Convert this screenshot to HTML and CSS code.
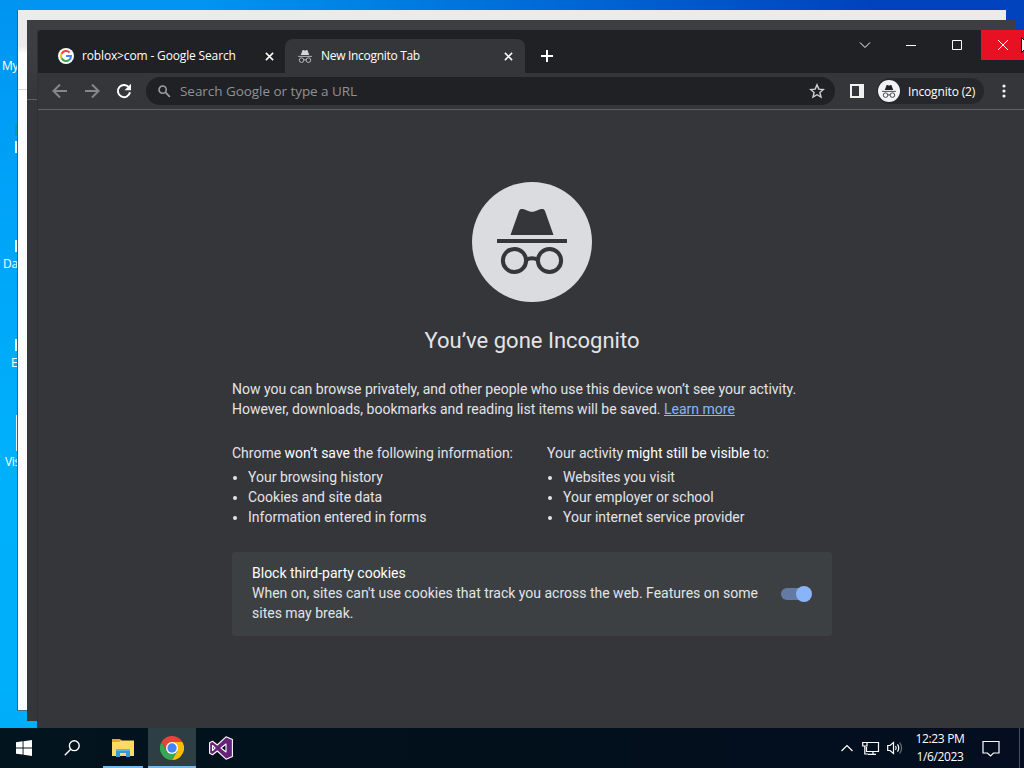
FILE: index.html
```html
<!DOCTYPE html>
<html lang="en">
<head>
    <meta charset="UTF-8">
    <meta name="viewport" content="width=device-width, initial-scale=1.0">
    <title>New Incognito Tab</title>
    <link rel="stylesheet" href="styles.css">
</head>
<body>
    <!-- shapes shared by the tab, the avatar and the page logo -->
    <svg class="defs" width="0" height="0">
        <symbol id="incognito" viewBox="0 0 70 66">
            <path fill="currentColor" d="M22 2C23 -.5 25 -.6 27 .3L32 2.300Q35 3.300 38 2.300L43 .3C45 -.6 47 -.5 48 2L56.500 26H13.500Z"/>
            <path fill="currentColor" d="M0 30H70V34H0Z"/>
            <g fill="none" stroke="currentColor" stroke-width="4">
                <circle cx="17.500" cy="51.500" r="11.600"/>
                <circle cx="52.500" cy="51.500" r="11.600"/>
                <path d="M29 51Q35 47.500 41 51"/>
            </g>
        </symbol>
    </svg>

    <div class="desktop">
        <span class="icon-label label-my">My</span>
        <span class="icon-label label-da">Da</span>
        <span class="icon-label label-e">E</span>
        <span class="icon-label label-vis">Vis</span>
        <i class="sliver sliver-green"></i>
        <i class="sliver sliver-1"></i>
        <i class="sliver sliver-2"></i>
        <i class="sliver sliver-3"></i>
        <i class="sliver sliver-4"></i>

        <div class="window window-light"></div>
        <div class="window window-dark"></div>

        <div class="window browser">
            <div class="tabstrip">
                <div class="tab">
                    <svg class="favicon" viewBox="0 0 16 16">
                        <circle cx="8" cy="8" r="8" fill="#fff"/>
                        <g fill="none" stroke-width="2">
                            <path stroke="#ea4335" d="M3.600 5.700A5 5 0 0 1 11.600 4.500"/>
                            <path stroke="#fbbc05" d="M3.600 10.300A5 5 0 0 1 3.600 5.700"/>
                            <path stroke="#34a853" d="M11.200 11.900A5 5 0 0 1 3.600 10.300"/>
                            <path stroke="#4285f4" d="M8 8H13A5 5 0 0 1 11.200 11.900"/>
                        </g>
                    </svg>
                    <span class="tab-title title-search">roblox&gt;com - Google Search</span>
                    <svg class="tab-close" viewBox="0 0 10 10"><path d="M1 1L9 9M9 1L1 9"/></svg>
                </div>
                <div class="tab active">
                    <svg class="favicon spy"><use href="#incognito"/></svg>
                    <span class="tab-title title-new">New Incognito Tab</span>
                    <svg class="tab-close" viewBox="0 0 10 10"><path d="M1 1L9 9M9 1L1 9"/></svg>
                </div>
                <svg class="new-tab" viewBox="0 0 12 12"><path d="M6 0V12M0 6H12"/></svg>
                <div class="controls">
                    <span class="control"><svg width="12" height="12" viewBox="0 0 12 12"><path d="M1 3.500L6 8.500L11 3.500"/></svg></span>
                    <span class="control"><svg width="12" height="12" viewBox="0 0 12 12"><path d="M1 6.500H11"/></svg></span>
                    <span class="control"><svg width="12" height="12" viewBox="0 0 12 12"><path d="M1.500 1.500H10.500V10.500H1.500Z"/></svg></span>
                    <span class="control control-close"><svg width="12" height="12" viewBox="0 0 12 12"><path d="M1 1L11 11M11 1L1 11"/></svg></span>
                </div>
            </div>

            <div class="toolbar">
                <svg class="nav dim" viewBox="0 0 16 16"><path d="M15 8H2M8 1.500L1.500 8L8 14.500"/></svg>
                <svg class="nav dim" viewBox="0 0 16 16"><path d="M1 8H14M8 1.500L14.500 8L8 14.500"/></svg>
                <svg class="nav" viewBox="0 0 16 16"><path d="M13.200 4.800A6.100 6.100 0 1 0 14 9.300"/><path class="solid" d="M15 .8V7.200H8.600Z"/></svg>
                <div class="omnibox">
                    <svg class="search" viewBox="0 0 14 14"><circle cx="5" cy="5" r="3.900"/><path d="M8 8L12.800 12.800"/></svg>
                    <span class="placeholder">Search Google or type a URL</span>
                    <svg class="star" viewBox="0 0 16 16"><path d="M8 1.800L9.800 6.100L14.400 6.500L10.900 9.600L12 14.100L8 11.700L4 14.100L5.100 9.600L1.600 6.500L6.200 6.100Z"/></svg>
                </div>
                <span class="side-panel"></span>
                <div class="profile">
                    <span class="avatar"><svg><use href="#incognito"/></svg></span>
                    <span class="profile-name">Incognito (2)</span>
                </div>
                <svg class="menu" viewBox="0 0 4 14"><circle cx="2" cy="2" r="1.600"/><circle cx="2" cy="7" r="1.600"/><circle cx="2" cy="12" r="1.600"/></svg>
            </div>

            <div class="page">
                <div class="logo"><svg><use href="#incognito"/></svg></div>
                <h1>You’ve gone Incognito</h1>
                <p class="intro">Now you can browse privately, and other people who use this device won’t see your activity.<br>However, downloads, bookmarks and reading list items will be saved. <a href="#">Learn more</a></p>
                <div class="columns">
                    <div>
                        Chrome <em>won’t save</em> the following information:
                        <ul>
                            <li>Your browsing history</li>
                            <li>Cookies and site data</li>
                            <li>Information entered in forms</li>
                        </ul>
                    </div>
                    <div>
                        Your activity <em>might still be visible</em> to:
                        <ul>
                            <li>Websites you visit</li>
                            <li>Your employer or school</li>
                            <li>Your internet service provider</li>
                        </ul>
                    </div>
                </div>
                <div class="cookies">
                    <div>
                        <em>Block third-party cookies</em><br>
                        When on, sites can't use cookies that track you across the web. Features on some<br>sites may break.
                    </div>
                    <span class="toggle"></span>
                </div>
            </div>
        </div>

        <div class="taskbar">
            <span class="task"><svg width="16" height="16" viewBox="0 0 16 16"><path fill="#fff" d="M0 2.200L6.600 1.300V7.500H0ZM7.500 1.200L16 0V7.500H7.500ZM0 8.400H6.600V14.600L0 13.700ZM7.500 8.400H16V16L7.500 14.800Z"/></svg></span>
            <span class="task"><svg width="16" height="16" viewBox="0 0 16 16" fill="none" stroke="#fff" stroke-width="1.400"><circle cx="10.300" cy="5.700" r="4.900"/><path d="M6.700 9.300L.8 15.200"/></svg></span>
            <span class="task task-files open">
                <svg width="22" height="20" viewBox="0 0 22 20">
                    <path fill="#e8a820" d="M0 1H8L10 3H21V6H0Z"/>
                    <path fill="#ffd966" d="M0 4H7L9 2.500H22V18H0Z"/>
                    <path fill="#3f96cf" d="M4 11H18V19H14V15H8V19H4Z"/>
                    <path fill="#62b4e6" d="M4 11H18V13H4Z"/>
                </svg>
            </span>
            <span class="task task-chrome open current">
                <svg width="24" height="24" viewBox="0 0 24 24">
                    <path fill="#fbbc05" d="M12 6H22.400A12 12 0 0 1 12 24L17.200 15Z"/>
                    <path fill="#34a853" d="M12 24A12 12 0 0 1 1.600 6L6.800 15L12 18L17.200 15Z"/>
                    <path fill="#ea4335" d="M1.600 6L6.800 15L12 6H22.400A12 12 0 0 0 1.600 6Z"/>
                    <circle cx="12" cy="12" r="6" fill="#fff"/>
                    <circle cx="12" cy="12" r="4.700" fill="#4285f4"/>
                </svg>
            </span>
            <span class="task task-vs">
                <svg width="24" height="24" viewBox="0 0 24 24">
                    <path fill="#68217a" fill-rule="evenodd" stroke="#fff" stroke-width="1.100" stroke-linejoin="round" d="M17 .8L23.400 3.500V20.500L17 23.200L8.300 15L3.500 18.700L.6 17.300V6.700L3.500 5.300L8.300 9L17 .8ZM17 8L12 12L17 16ZM3.500 9.500V14.500L6 12Z"/>
                </svg>
            </span>

            <div class="tray">
                <svg width="14" height="8" viewBox="0 0 14 8"><path d="M1.500 7L7 1.500L12.500 7"/></svg>
                <svg class="network" width="18" height="14" viewBox="0 0 18 14"><path d="M5.500 1.500H16.500V10.500H4.500V6M11 10.500V13M6 13.300H14M.7 1.500H5V5H.7ZM2.800 5V13H6"/></svg>
                <svg class="volume" width="16" height="14" viewBox="0 0 16 14"><path d="M.7 4.500H3L6.500 1.500V12.500L3 9.500H.7ZM8.500 5Q10 7 8.500 9M10.500 3.300Q13 7 10.500 10.700"/><path class="faint" d="M12.700 1.500Q16.500 7 12.700 12.500"/></svg>
                <div class="clock"><span class="time">12:23 PM</span><span class="date">1/6/2023</span></div>
                <svg class="notice" width="18" height="17" viewBox="0 0 18 17"><path d="M1 1.500H17V13H11.500L8.500 16L5.500 13H1Z"/></svg>
            </div>
        </div>

        <svg class="cursor" width="12" height="19" viewBox="0 0 12 19"><path fill="#fff" stroke="#000" d="M.5 .5V15.500L4 12L6.500 18L9 17L6.500 11.500H11.300Z"/></svg>
    </div>
</body>
</html>
```
FILE: styles.css
```css
* {
    box-sizing: border-box;
}

body {
    margin: 0;
    font-family: "Open Sans", "Noto Sans", sans-serif;
    font-size: 12px;
    color: #fff;
}

svg {
    display: block;
    flex: none;
}

em {
    font-style: normal;
    color: #fff;
}

.defs {
    position: absolute;
}

.desktop {
    position: relative;
    width: 1024px;
    height: 768px;
    overflow: hidden;
    background: linear-gradient(90deg, rgba(0, 62, 190, 0) 20%, rgba(0, 62, 186, 0.95) 85%),
        linear-gradient(180deg, #0094f0 0, #00a2f8 180px, #00b0fb 450px, #00aef8 100%);
}

/* desktop shortcuts, mostly hidden behind the windows */
.icon-label {
    position: absolute;
    line-height: 16px;
    letter-spacing: -0.3px;
}

.label-my { left: 2px; top: 58px; }
.label-da { left: 3px; top: 256px; }
.label-e { left: 11px; top: 355px; }
.label-vis { left: 5px; top: 454px; }

.sliver {
    position: absolute;
    left: 15px;
    width: 3px;
    height: 12px;
    background: #e8f6ff;
}

.sliver-green { top: 124px; background: #0c9aa8; }
.sliver-1 { top: 141px; }
.sliver-2 { top: 240px; }
.sliver-3 { top: 339px; }
.sliver-4 { top: 415px; height: 36px; width: 2px; left: 16px; }

.window {
    position: absolute;
}

.window-light {
    left: 17px;
    top: 10px;
    width: 989px;
    height: 701px;
    background: linear-gradient(180deg, #ebebeb 0, #ebebeb 36px, #fff 44px, #fff 79px, #d5d7da 79px, #d5d7da 80px, #fff 80px);
    border-left: 1px solid #23668f;
    border-bottom: 1px solid #4d6c7c;
}

.window-dark {
    left: 27px;
    top: 20px;
    width: 989px;
    height: 701px;
    background: linear-gradient(180deg, #3c3f41 0, #3c3e41 30px, #35363a 79px, #5f6164 79px, #5f6164 80px, #35363a 80px);
}

.browser {
    left: 37px;
    top: 30px;
    width: 990px;
    height: 698px;
    background: #35363a;
    border-left: 1px solid #303135;
}

.tabstrip {
    display: flex;
    align-items: flex-end;
    height: 43px;
    background: #202124;
    border-radius: 4px 0 0 0;
}

.tab {
    display: flex;
    align-items: center;
    width: 240px;
    height: 34px;
    padding: 0 12px 0 13px;
}

.tab:first-child {
    width: 247px;
    padding: 0 11px 0 20px;
}

.tab.active {
    background: #35363a;
    border-radius: 8px 8px 0 0;
}

.favicon {
    width: 16px;
    height: 16px;
}

.spy {
    width: 14px;
    height: 13px;
    color: #d5d7da;
}

.tab-title {
    flex: 1;
    margin-left: 8px;
    padding-bottom: 1px;
    white-space: nowrap;
}

.title-search {
    letter-spacing: -0.15px;
}

.title-new {
    margin-left: 9px;
    letter-spacing: -0.3px;
}

.tab-close {
    width: 9px;
    height: 9px;
    stroke: #fff;
    stroke-width: 1.700;
}

.new-tab {
    width: 12px;
    height: 12px;
    margin: 0 0 11px 16px;
    stroke: #fff;
    stroke-width: 2;
}

.controls {
    display: flex;
    align-self: flex-start;
    margin-left: auto;
}

.control {
    display: flex;
    align-items: center;
    justify-content: center;
    width: 46px;
    height: 30px;
    padding-right: 2px;
}

.control svg {
    fill: none;
    stroke: #fff;
}

.control-close {
    background: #e81123;
}

.toolbar {
    display: flex;
    align-items: center;
    height: 37px;
    padding: 0 20px 0 14px;
    border-bottom: 1px solid #5f6164;
}

.nav {
    width: 16px;
    height: 16px;
    margin-right: 16px;
    fill: none;
    stroke: #fff;
    stroke-width: 2;
}

.nav .solid {
    fill: #fff;
    stroke: none;
}

.nav.dim {
    stroke: #85878a;
}

.omnibox {
    display: flex;
    align-items: center;
    width: 689px;
    height: 28px;
    margin-left: -2px;
    padding: 0 10px 0 12px;
    border-radius: 14px;
    background: #202124;
}

.search {
    width: 13px;
    height: 13px;
    fill: none;
    stroke: #9aa0a6;
    stroke-width: 1.700;
}

.placeholder {
    flex: 1;
    margin-left: 9px;
    font-size: 13.500px;
    letter-spacing: -0.05px;
    color: #8f9296;
}

.star {
    width: 16px;
    height: 16px;
    fill: none;
    stroke: #d0d2d5;
    stroke-width: 1.400;
}

.side-panel {
    width: 14px;
    height: 14px;
    margin-left: 15px;
    border: 2px solid #f1f1f1;
    border-right-width: 5px;
}

.profile {
    display: flex;
    align-items: center;
    width: 107px;
    height: 26px;
    margin-left: 13px;
    padding-left: 1px;
    border-radius: 13px;
    background: #26272a;
}

.avatar {
    display: flex;
    align-items: center;
    justify-content: center;
    width: 22px;
    height: 22px;
    border-radius: 50%;
    background: #f1f3f4;
    color: #202124;
}

.avatar svg {
    width: 14px;
    height: 13px;
}

.profile-name {
    margin-left: 8px;
    letter-spacing: -0.15px;
    white-space: nowrap;
}

.menu {
    width: 4px;
    height: 14px;
    margin-left: 18px;
    fill: #f1f3f4;
}

.page {
    display: flex;
    flex-direction: column;
    width: 600px;
    margin-left: 194px;
    padding-top: 72px;
    font-family: Roboto, sans-serif;
    font-size: 14px;
    line-height: 20px;
    color: #e3e4e7;
    white-space: nowrap;
}

.logo {
    align-self: center;
    width: 120px;
    height: 120px;
    padding: 27px 25px;
    border-radius: 50%;
    background: #dadce0;
    color: #35363a;
}

.logo svg {
    width: 70px;
    height: 66px;
}

h1 {
    margin: 24px 0 0;
    font-size: 22px;
    font-weight: 400;
    line-height: 30px;
    text-align: center;
}

.intro {
    margin: 23px 0 24px;
}

a {
    color: #8ab4f8;
}

.columns {
    display: grid;
    grid-template-columns: 285px 285px;
    column-gap: 30px;
}

ul {
    margin: 4px 0 0;
    padding-left: 16px;
}

.cookies {
    display: flex;
    align-items: center;
    justify-content: space-between;
    height: 84px;
    margin-top: 25px;
    padding: 0 20px 2px;
    border-radius: 4px;
    background: #3c4043;
}

.toggle {
    position: relative;
    width: 28px;
    height: 12px;
    margin: 2px 3px 0 0;
    border-radius: 6px;
    background: #637ba3;
}

.toggle::after {
    content: "";
    position: absolute;
    right: -3px;
    top: -2px;
    width: 16px;
    height: 16px;
    border-radius: 50%;
    background: #8ab4f8;
}

.taskbar {
    position: absolute;
    left: 0;
    bottom: 0;
    display: flex;
    width: 1024px;
    height: 40px;
    background: linear-gradient(90deg, #02141d 0, #020f1c 60%, #040e20 100%);
}

.task {
    display: flex;
    align-items: center;
    justify-content: center;
    width: 48px;
    height: 40px;
}

.task-files {
    margin-left: 7px;
    width: 40px;
}

.task-chrome {
    margin-left: 5px;
}

.task-vs {
    margin-left: 1px;
}

.open {
    border-bottom: 2px solid #76b9ed;
    padding-top: 2px;
}

.current {
    background: #2e3e45;
}

.tray {
    display: flex;
    align-items: center;
    width: 180px;
    margin-left: auto;
    border-right: 1px solid #45505d;
    margin-right: 4px;
}

.tray svg {
    fill: none;
    stroke: #fff;
    stroke-width: 1.200;
}

.network {
    margin-left: 8px;
}

.volume {
    margin-left: 7px;
}

.tray .faint {
    stroke: #687380;
}

.clock {
    display: flex;
    flex-direction: column;
    align-items: center;
    width: 50px;
    margin-left: 12px;
    line-height: 18px;
    letter-spacing: -0.35px;
    white-space: nowrap;
}

.notice {
    margin-left: 17px;
}

.cursor {
    position: absolute;
    left: 1021px;
    top: 37px;
}
```
